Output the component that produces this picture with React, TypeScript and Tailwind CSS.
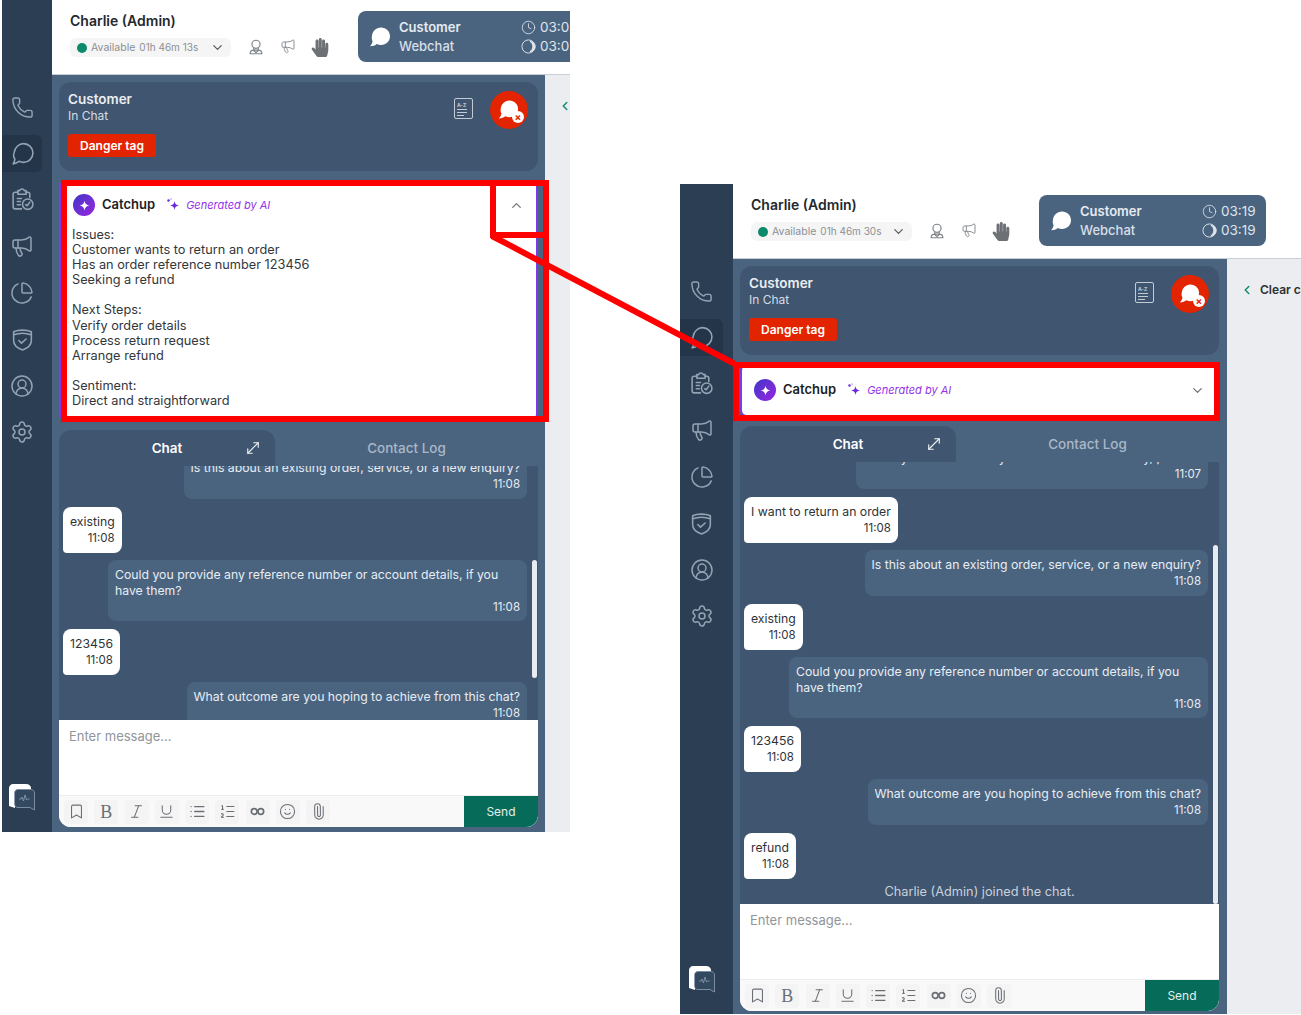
import {
  Bookmark,
  ChartPie,
  ChevronDown,
  ChevronLeft,
  ChevronUp,
  CircleUserRound,
  Clock,
  Italic,
  List,
  ListOrdered,
  Megaphone,
  MoveDiagonal,
  Paperclip,
  Phone,
  Settings,
  Smile,
  Underline,
} from "lucide-react";
import { FaHandPaper } from "react-icons/fa";

interface Message {
  from: "agent" | "customer";
  text: string;
  time: string;
  width?: string;
}

const messages: Message[] = [
  { from: "customer", text: "I want to return an order", time: "11:08" },
  { from: "agent", text: "Is this about an existing order, service, or a new enquiry?", time: "11:08" },
  { from: "customer", text: "existing", time: "11:08" },
  {
    from: "agent",
    text: "Could you provide any reference number or account details, if you have them?",
    time: "11:08",
    width: "w-[419px]",
  },
  { from: "customer", text: "123456", time: "11:08" },
  { from: "agent", text: "What outcome are you hoping to achieve from this chat?", time: "11:08" },
  { from: "customer", text: "refund", time: "11:08" },
];

function ChatBubbleFilled({ className }: { className: string }) {
  return (
    <svg viewBox="0 0 24 24" className={className} fill="currentColor">
      <path d="M13 2.500c5 0 9 3.800 9 8.700s-4 8.800-9 8.800c-1.500 0-3-.3-4.200-1-1.500 1.300-3.900 2.300-6.800 2.300 1.300-1.200 2.300-2.900 2.600-5C3.900 15 3.500 13 3.900 11.200 4.300 6.300 8 2.500 13 2.500z" />
    </svg>
  );
}

function ClipboardStatus() {
  return (
    <svg viewBox="0 0 24 24" className="h-[25px] w-[25px]" fill="none" stroke="currentColor" strokeWidth="1.500" strokeLinecap="round" strokeLinejoin="round">
      <path d="M11 21H5a2 2 0 0 1-2-2V7a2 2 0 0 1 2-2h2.500" />
      <path d="M7.500 3.500h1.700a2.500 2.500 0 0 1 4.600 0h1.700V7h-8z" />
      <path d="M15.500 5H17a2 2 0 0 1 2 2v3" />
      <path d="M7 11h4M7 14h3M7 17h3" />
      <circle cx="17" cy="16.500" r="5" />
      <path d="m15 17 1.500 1 2.500-3.500" />
    </svg>
  );
}

function ShieldBand() {
  return (
    <svg viewBox="0 0 24 24" className="h-[25px] w-[25px]" fill="none" stroke="currentColor" strokeWidth="1.500" strokeLinecap="round" strokeLinejoin="round">
      <path d="M3.500 4.500C8 2.500 16 2.500 20.500 4.500V13c0 4.500-4 7.500-8.500 9-4.500-1.500-8.500-4.500-8.500-9z" />
      <path d="M3.500 7.500c5-1.800 12-1.800 17 0" />
      <path d="m8.500 13 2.500 2.500 4.500-4" />
    </svg>
  );
}

function AppLogo() {
  return (
    <svg viewBox="0 0 28 28" className="h-[28px] w-[28px]">
      <path d="M5 1h13c3 0 5 2 5 4v1H11c-2.500 0-4 2-4 4v15l-6-2V5c0-2 2-4 4-4z" fill="#ffffff" />
      <path d="M10 6.500h13c2 0 3.500 1.500 3.500 3.500v17L22 24.500H10c-2 0-3.500-1.500-3.500-3.500V10c0-2 1.500-3.500 3.500-3.500z" fill="#33495f" stroke="#8fa0b3" strokeWidth="0.800" />
      <path d="M11 16h2l1-2 1.500 4 1.500-6 1.500 5 1-1h2" fill="none" stroke="#8fa0b3" strokeWidth="0.800" />
    </svg>
  );
}

function Sidebar({ className, itemWidth }: { className: string; itemWidth: string }) {
  const itemClass = `flex h-[46.500px] items-center justify-center ${itemWidth}`;
  return (
    <div className={`flex shrink-0 flex-col bg-[#2b3e54] pt-[84px] text-[#94a3b3] ${className}`}>
      <div className={itemClass}>
        <Phone className="h-[23px] w-[23px]" strokeWidth={1.500} />
      </div>
      <div className={`my-[4.500px] flex h-[37px] items-center justify-center rounded-r-md bg-[#243549] ${itemWidth}`}>
        <svg viewBox="0 0 24 24" className="h-[25px] w-[25px]" fill="none" stroke="currentColor" strokeWidth="1.500" strokeLinejoin="round">
          <path d="M13 2.500c5 0 9 4 9 9s-4 9-9 9c-1.500 0-3-.4-4.300-1-1.400 1-3.100 2-5.700 2.500 1-1.400 1.600-3 1.700-4.800C3.300 15.500 3 13.500 4 11 4.500 6.500 8.500 2.500 13 2.500z" />
        </svg>
      </div>
      <div className={itemClass}>
        <ClipboardStatus />
      </div>
      <div className={itemClass}>
        <Megaphone className="h-[24px] w-[24px]" strokeWidth={1.500} />
      </div>
      <div className={itemClass}>
        <ChartPie className="h-[24px] w-[24px]" strokeWidth={1.500} />
      </div>
      <div className={itemClass}>
        <ShieldBand />
      </div>
      <div className={itemClass}>
        <CircleUserRound className="h-[24px] w-[24px]" strokeWidth={1.500} />
      </div>
      <div className={itemClass}>
        <Settings className="h-[24px] w-[24px]" strokeWidth={1.500} />
      </div>
      <div className={`mt-auto mb-[21px] flex justify-center ${itemWidth}`}>
        <AppLogo />
      </div>
    </div>
  );
}

function AgentStandIcon() {
  return (
    <svg viewBox="0 0 20 20" className="h-[18px] w-[18px]" fill="none" stroke="currentColor" strokeWidth="1.300" strokeLinecap="round">
      <circle cx="10" cy="7" r="4.500" />
      <path d="M7.500 11v2.500M12.500 11v2.500M3.500 17.500c0-2.500 2-4 4-4h5c2 0 4 1.500 4 4zM8 14.500l2 1.500 2-1.500" />
    </svg>
  );
}

function TopBar({ time, pillTime }: { time: string; pillTime: string }) {
  return (
    <div className="relative flex h-[75px] shrink-0 items-start border-b border-[#c7ced6] bg-white pl-[18px] pt-[12px]">
      <div className="w-[177px] shrink-0">
        <div className="text-[14px] leading-[18px] font-semibold text-[#24282d]">Charlie (Admin)</div>
        <div className="mt-[8px] flex h-[19px] w-[161px] items-center rounded-md bg-[#f5f5f5] pl-[7px]">
          <span className="h-[10px] w-[10px] rounded-full bg-[#0b8a6c]" />
          <span className="ml-[4px] text-[10.500px] text-[#8b9096]">Available</span>
          <span className="ml-[4px] text-[10px] text-[#8b9096]">{time}</span>
          <ChevronDown className="ml-auto mr-[6px] h-[15px] w-[15px] text-[#555b62]" />
        </div>
      </div>
      <div className="mt-[26px] flex w-[18px] shrink-0 items-center justify-center text-[#7d8388]">
        <AgentStandIcon />
      </div>
      <div className="ml-[14px] mt-[26px] flex w-[18px] shrink-0 items-center justify-center text-[#8a9096]">
        <Megaphone className="h-[16px] w-[16px]" strokeWidth={1.500} />
      </div>
      <div className="ml-[14px] mt-[26px] flex w-[18px] shrink-0 items-center justify-center text-[#6d7175]">
        <FaHandPaper className="h-[19px] w-[19px]" />
      </div>
      <div className="ml-[29px] -mt-px flex h-[51px] w-[227px] shrink-0 items-center rounded-lg bg-[#4a6480] pl-[10px] text-[#e6ebf1]">
        <ChatBubbleFilled className="h-[24px] w-[24px] shrink-0 text-white" />
        <div className="ml-[7px] w-[122px] shrink-0 text-[13px] leading-[19px]">
          <div className="font-semibold">Customer</div>
          <div className="font-medium text-[#d8dfe7]">Webchat</div>
        </div>
        <div className="text-[13.500px] leading-[19px] text-[#dfe5ec]">
          <div className="flex items-center gap-[4px]">
            <Clock className="h-[15px] w-[15px]" strokeWidth={1.300} />
            {pillTime}
          </div>
          <div className="flex items-center gap-[4px]">
            <svg viewBox="0 0 16 16" className="h-[15px] w-[15px]" fill="none" stroke="currentColor" strokeWidth="1">
              <circle cx="8" cy="8" r="7" />
              <path d="M9.500 2.500a5.500 5.500 0 0 1 0 11 6.500 6.500 0 0 0 0-11z" fill="currentColor" />
            </svg>
            {pillTime}
          </div>
        </div>
      </div>
    </div>
  );
}

function CustomerCard() {
  return (
    <div className="relative flex h-[89px] items-start rounded-xl bg-[#40556f] pl-[9px] pt-[8px]">
      <div>
        <div className="text-[13.500px] leading-[18px] font-semibold text-[#eaeef2]">Customer</div>
        <div className="text-[12px] leading-[16px] text-[#d5dce5]">In Chat</div>
        <div className="mt-[10px] flex h-[23px] w-[88px] items-center justify-center rounded-[3px] bg-[#e32400] text-[12px] font-semibold text-white">
          Danger tag
        </div>
      </div>
      <div className="ml-auto mr-[65px] mt-[8px] flex h-[21px] w-[19px] flex-col justify-center rounded-[2px] border border-[#c3ccd6] px-[2px] text-[#c3ccd6]">
        <span className="text-[5px] leading-[6px] font-bold">A-Z</span>
        <span className="mt-[1px] h-px w-[10px] bg-[#c3ccd6]" />
        <span className="mt-[2px] h-px w-[10px] bg-[#c3ccd6]" />
        <span className="mt-[2px] h-px w-[7px] bg-[#c3ccd6]" />
      </div>
      <div className="absolute right-[10px] top-[9px] flex h-[38px] w-[38px] items-center justify-center rounded-full bg-[#e32400] text-white">
        <ChatBubbleFilled className="mb-[2px] mr-[2px] h-[23px] w-[23px]" />
        <span className="absolute bottom-[6px] right-[4px] flex h-[12px] w-[12px] items-center justify-center rounded-full bg-white text-[10px] leading-none font-bold text-[#e32400]">
          ×
        </span>
      </div>
    </div>
  );
}

function SparkIcon() {
  return (
    <svg viewBox="0 0 16 16" className="h-[16px] w-[16px] text-[#6d28d9]" fill="currentColor">
      <path d="M9.500 4c.5 3 1.500 4 4.500 4.500-3 .5-4 1.500-4.500 4.500C9 10 8 9 5 8.500 8 8 9 7 9.500 4z" />
      <circle cx="3.500" cy="3.500" r="1.200" />
      <circle cx="6" cy="2" r="0.600" />
    </svg>
  );
}

function CatchupCard({ open }: { open: boolean }) {
  return (
    <div className={`mt-[10px] overflow-hidden rounded-md border-l-2 border-r-2 border-b border-[#7c3aed] bg-white ${open ? "h-[239px]" : "h-[51px]"}`}>
      <div className={`flex items-center pl-[12px] pr-[12px] ${open ? "h-[48px]" : "h-[50px]"}`}>
        <span className="flex h-[22px] w-[22px] items-center justify-center rounded-full bg-gradient-to-br from-[#3b32c9] to-[#9a1fe0]">
          <svg viewBox="0 0 16 16" className="h-[13px] w-[13px]" fill="#ffffff">
            <path d="M8 2c.5 3.500 2.500 5.500 6 6-3.500.5-5.500 2.500-6 6-.5-3.500-2.500-5.500-6-6 3.500-.5 5.500-2.500 6-6z" />
          </svg>
        </span>
        <span className="ml-[7px] text-[13px] font-semibold text-[#1b1e22]">Catchup</span>
        <span className="ml-[10px]">
          <SparkIcon />
        </span>
        <span className="ml-[5px] text-[11px] italic text-[#9333ea]">Generated by AI</span>
        {open ? (
          <ChevronUp className="ml-auto h-[15px] w-[15px] text-[#6d7278]" />
        ) : (
          <ChevronDown className="ml-auto h-[15px] w-[15px] text-[#6d7278]" />
        )}
      </div>
      {open && (
        <div className="-mt-[2px] pl-[11px] text-[12.750px] leading-[15.100px] text-[#33373c]">
          <p>Issues:</p>
          <p>Customer wants to return an order</p>
          <p>Has an order reference number 123456</p>
          <p>Seeking a refund</p>
          <p className="mt-[15.100px]">Next Steps:</p>
          <p>Verify order details</p>
          <p>Process return request</p>
          <p>Arrange refund</p>
          <p className="mt-[15.100px]">Sentiment:</p>
          <p>Direct and straightforward</p>
        </div>
      )}
    </div>
  );
}

function Bubble({ message }: { message: Message }) {
  if (message.from === "customer") {
    return (
      <div className="ml-[4px] w-fit rounded-lg rounded-bl-sm bg-white px-[7px] py-[7px] text-[12.250px] leading-[16px] text-[#2f3338]">
        <div>{message.text}</div>
        <div className="text-right text-[11.500px]">{message.time}</div>
      </div>
    );
  }
  return (
    <div className={`mr-[11px] self-end rounded-lg bg-[#4a6480] px-[7px] pt-[7px] text-[12.250px] leading-[16px] text-[#e8edf2] ${message.width ? `pb-[6px] ${message.width}` : "w-fit pb-[7px]"}`}>
      <div>{message.text}</div>
      <div className="text-right text-[11.500px]">{message.time}</div>
    </div>
  );
}

function ChatThread({ first, offsetClass, skipFirstCustomer, scrollClass }: { first: Message; offsetClass: string; skipFirstCustomer: boolean; scrollClass: string }) {
  const items = skipFirstCustomer ? messages.slice(2) : messages;
  return (
    <div className="relative min-h-0 flex-1 overflow-hidden bg-[#40556f]">
      <div className={`flex flex-col gap-[7.500px] ${offsetClass}`}>
        <Bubble message={first} />
        {items.map((message) => (
          <Bubble key={message.text} message={message} />
        ))}
        <div className="-mt-[2px] text-center text-[12.750px] leading-[16px] text-[#c8d1dc]">Charlie (Admin) joined the chat.</div>
      </div>
      <div className={`absolute right-px w-[5px] rounded-full bg-[#e8ecf0] ${scrollClass}`} />
    </div>
  );
}

function Composer() {
  const buttonClass = "flex h-[24px] w-[24px] items-center justify-center rounded bg-[#f4f4f5] text-[#6a6f75]";
  const iconClass = "h-[17px] w-[17px]";
  return (
    <div className="h-[107px] shrink-0 overflow-hidden rounded-b-xl bg-white">
      <div className="h-[75px] pl-[10px] pt-[7px] text-[13px] text-[#90959b]">Enter message...</div>
      <div className="flex h-[32px] items-center border-t border-[#ececec] bg-[#f9f9f9] pl-[5px]">
        <div className="flex gap-[6.250px]">
          <span className={buttonClass}>
            <Bookmark className={iconClass} strokeWidth={1.500} />
          </span>
          <span className={buttonClass}>
            <span className="[font-family:'Liberation_Serif',serif] text-[18px] leading-none text-[#6a6f75]">B</span>
          </span>
          <span className={buttonClass}>
            <Italic className={iconClass} strokeWidth={1.500} />
          </span>
          <span className={buttonClass}>
            <Underline className={iconClass} strokeWidth={1.500} />
          </span>
          <span className={buttonClass}>
            <List className={iconClass} strokeWidth={1.800} />
          </span>
          <span className={buttonClass}>
            <ListOrdered className={iconClass} strokeWidth={1.500} />
          </span>
          <span className={buttonClass}>
            <svg viewBox="0 0 18 18" className={iconClass} fill="none" stroke="currentColor" strokeWidth="1.800">
              <circle cx="5.500" cy="9" r="3" />
              <circle cx="12.500" cy="9" r="3" />
            </svg>
          </span>
          <span className={buttonClass}>
            <Smile className={iconClass} strokeWidth={1.500} />
          </span>
          <span className={buttonClass}>
            <Paperclip className={`${iconClass} rotate-[-45deg]`} strokeWidth={1.500} />
          </span>
        </div>
        <div className="ml-auto flex h-full w-[74px] items-center justify-center bg-[#076b59] text-[12px] text-[#e4f0ec]">Send</div>
      </div>
    </div>
  );
}

interface AgentPanelProps {
  positionClass: string;
  sidebarClass: string;
  itemWidth: string;
  mainClass: string;
  time: string;
  pillTime: string;
  open: boolean;
  first: Message;
  offsetClass: string;
  scrollClass: string;
  skipFirstCustomer: boolean;
}

function AgentPanel(props: AgentPanelProps) {
  const { positionClass, sidebarClass, itemWidth, mainClass, time, pillTime, open, first, offsetClass, scrollClass, skipFirstCustomer } = props;
  return (
    <div className={`absolute flex overflow-hidden ${positionClass}`}>
      <Sidebar className={sidebarClass} itemWidth={itemWidth} />
      <div className="flex min-w-0 flex-1 flex-col">
        <TopBar time={time} pillTime={pillTime} />
        <div className="flex min-h-0 flex-1">
          <div className={`relative flex shrink-0 flex-col bg-[#4a6480] pl-[7px] pt-[7px] ${mainClass}`}>
            <div className="w-[479px]">
              <CustomerCard />
              <CatchupCard open={open} />
            </div>
            <div className="mt-[10px] flex h-[36px] w-[479px] shrink-0 text-[13.500px] leading-[36px] font-semibold">
              <div className="relative w-[216px] rounded-t-xl bg-[#40556f] text-center text-white">
                Chat
                <MoveDiagonal className="absolute right-[13px] top-[9px] h-[18px] w-[18px] text-[#eef2f5]" strokeWidth={1.500} />
              </div>
              <div className="flex-1 text-center font-medium text-[#a9b7c7]">Contact Log</div>
            </div>
            <div className="flex min-h-0 w-[479px] flex-1 flex-col">
              <ChatThread first={first} offsetClass={offsetClass} scrollClass={scrollClass} skipFirstCustomer={skipFirstCustomer} />
              <Composer />
            </div>
          </div>
          <div className="flex-1 whitespace-nowrap bg-[#ebedf0] pl-[16px] pt-[22px] text-[12px] font-semibold text-[#2c3137]">
            <div className="flex items-center gap-[6px]">
              <ChevronLeft className="-ml-[3px] h-[14px] w-[14px] shrink-0 text-[#0f8b71]" strokeWidth={2.500} />
              Clear conversation
            </div>
          </div>
        </div>
      </div>
    </div>
  );
}

export default function App() {
  return (
    <div className="relative h-[1015px] w-[1301px] overflow-hidden bg-white [font-family:Inter,sans-serif]">
      <AgentPanel
        positionClass="left-[2px] top-0 h-[832px] w-[568px]"
        sidebarClass="w-[50px]"
        itemWidth="w-[40px]"
        mainClass="w-[493px] pb-[5px]"
        time="01h 46m 13s"
        pillTime="03:02"
        open
        first={{ from: "agent", text: "Is this about an existing order, service, or a new enquiry?", time: "11:08" }}
        offsetClass="-mt-[13px]"
        scrollClass="top-[94px] h-[118px]"
        skipFirstCustomer
      />
      <AgentPanel
        positionClass="left-[680px] top-[184px] h-[830px] w-[621px]"
        sidebarClass="w-[53px]"
        itemWidth="w-[43px]"
        mainClass="w-[494px] pb-[3px]"
        time="01h 46m 30s"
        pillTime="03:19"
        open={false}
        first={{ from: "agent", text: "Could you tell me what you would like to do today, please?", time: "11:07" }}
        offsetClass="-mt-[19px]"
        scrollClass="top-[83px] bottom-0"
        skipFirstCustomer={false}
      />

      {/* red call-out drawn over the two screenshots */}
      <div className="absolute left-[61px] top-[180px] h-[242px] w-[488px] border-[6px] border-[#ff0000]" />
      <div className="absolute left-[490px] top-[180px] h-[58px] w-[59px] border-[6px] border-[#ff0000]" />
      <div className="absolute left-[733px] top-[362px] h-[59px] w-[487px] border-[6px] border-[#ff0000]" />
      <svg viewBox="0 0 1301 1015" className="pointer-events-none absolute inset-0 h-[1015px] w-[1301px]">
        <line x1="492" y1="236" x2="735" y2="364" stroke="#ff0000" strokeWidth="6" />
      </svg>
    </div>
  );
}
